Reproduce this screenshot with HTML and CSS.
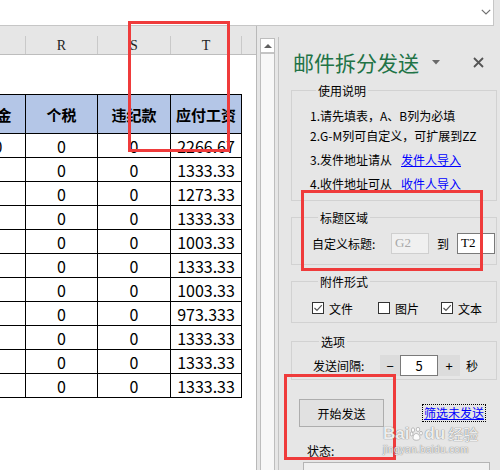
FILE: index.html
```html
<!DOCTYPE html>
<html lang="zh">
<head>
<meta charset="utf-8">
<title>邮件拆分发送</title>
<link rel="stylesheet" href="styles.css">
</head>
<body>
<div class="app">
  <div class="topbar">
    <svg class="chev" width="10" height="6" viewBox="0 0 10 6"><polyline points="0.8,0.8 5,5 9.2,0.8" fill="none" stroke="#707070" stroke-width="1.2"/></svg>
  </div>
  <div class="main">
    <div class="sheet">
      <div class="colhead">
        <div class="ch w73"></div>
        <div class="ch w72">R</div>
        <div class="ch w73">S</div>
        <div class="ch w71">T</div>
        <div class="ch w72"></div>
      </div>
      <div class="grid">
        <div class="c h">公积金</div><div class="c h">个税</div><div class="c h">违纪款</div><div class="c h">应付工资</div>
        <div class="c">200</div><div class="c">0</div><div class="c">0</div><div class="c">2266.67</div>
        <div class="c"></div><div class="c">0</div><div class="c">0</div><div class="c">1333.33</div>
        <div class="c"></div><div class="c">0</div><div class="c">0</div><div class="c">1273.33</div>
        <div class="c"></div><div class="c">0</div><div class="c">0</div><div class="c">1333.33</div>
        <div class="c"></div><div class="c">0</div><div class="c">0</div><div class="c">1003.33</div>
        <div class="c"></div><div class="c">0</div><div class="c">0</div><div class="c">1333.33</div>
        <div class="c"></div><div class="c">0</div><div class="c">0</div><div class="c">1003.33</div>
        <div class="c"></div><div class="c">0</div><div class="c">0</div><div class="c">973.333</div>
        <div class="c"></div><div class="c">0</div><div class="c">0</div><div class="c">1333.33</div>
        <div class="c"></div><div class="c">0</div><div class="c">0</div><div class="c">1333.33</div>
        <div class="c"></div><div class="c">0</div><div class="c">0</div><div class="c">1333.33</div>
      </div>
    </div>
    <div class="vscroll">
      <div class="up"><svg width="8" height="4" viewBox="0 0 8 4"><polygon points="0,4 8,4 4,0" fill="#606060"/></svg></div>
      <div class="track"></div>
    </div>
    <div class="pane">
      <div class="titlerow">
        <span class="title">邮件拆分发送</span>
        <svg class="tri" width="8" height="5" viewBox="0 0 8 5"><polygon points="0,0 8,0 4,4.5" fill="#6a6a6a"/></svg>
        <svg class="close" width="11" height="11" viewBox="0 0 11 11"><path d="M1 1 L10 10 M10 1 L1 10" stroke="#555" stroke-width="1.8"/></svg>
      </div>

      <div class="group g1">
        <div class="legend">使用说明</div>
        <div class="note n1">1.请先填表，A、B列为必填</div>
        <div class="note">2.G-M列可自定义，可扩展到ZZ</div>
        <div class="note gap">3.发件地址请从<a class="link">发件人导入</a></div>
        <div class="note gap">4.收件地址可从<a class="link">收件人导入</a></div>
      </div>

      <div class="group g2">
        <div class="legend">标题区域</div>
        <div class="row r2">
          <span class="lbl l2">自定义标题:</span>
          <span class="inp dis">G2</span>
          <span class="to">到</span>
          <span class="inp">T2</span>
        </div>
      </div>

      <div class="group g3">
        <div class="legend">附件形式</div>
        <div class="row r3">
          <span class="chk"><span class="box"><svg width="10" height="10" viewBox="0 0 10 10"><polyline points="1.5,5 4,7.5 8.8,2.2" fill="none" stroke="#555" stroke-width="1.2"/></svg></span>文件</span>
          <span class="chk c2"><span class="box"></span>图片</span>
          <span class="chk c3"><span class="box"><svg width="10" height="10" viewBox="0 0 10 10"><polyline points="1.5,5 4,7.5 8.8,2.2" fill="none" stroke="#555" stroke-width="1.2"/></svg></span>文本</span>
        </div>
      </div>

      <div class="group g4">
        <div class="legend">选项</div>
        <div class="row r4">
          <span class="lbl l4">发送间隔:</span>
          <span class="spin minus">−</span>
          <span class="num">5</span>
          <span class="spin plus">+</span>
          <span class="sec">秒</span>
        </div>
      </div>

      <div class="actions">
        <span class="btn">开始发送</span>
        <a class="link focus">筛选未发送</a>
      </div>
      <div class="status-lbl">状态:</div>
      <div class="status"></div>
    </div>
  </div>

  <div class="mark m1"></div>
  <div class="mark m2"></div>
  <div class="mark m3"></div>

  <div class="wm">
    <div class="wm-top"><span class="wm-en">Bai</span><svg class="paw" width="13" height="14" viewBox="0 0 13 14"><g fill="rgba(255,255,255,0.85)" stroke="rgba(130,130,130,0.6)" stroke-width="0.8"><ellipse cx="3" cy="3" rx="1.6" ry="2.2"/><ellipse cx="8" cy="2.4" rx="1.6" ry="2.2"/><ellipse cx="1.6" cy="7" rx="1.4" ry="1.9"/><ellipse cx="11" cy="6.2" rx="1.4" ry="1.9"/><path d="M6.2 6.5 C3.5 6.5 2.2 11 3.6 12.5 C5 13.6 8.4 13.4 9.6 12.2 C10.8 10.8 9 6.5 6.2 6.5 Z"/></g></svg><span class="wm-en">du</span><span class="wm-cn">经验</span></div>
    <div class="wm-url">jingyan.baidu.com</div>
  </div>
</div>
</body>
</html>
```
FILE: styles.css
```css
* { box-sizing: border-box; }
html, body { margin: 0; padding: 0; }
body {
  width: 500px;
  height: 470px;
  overflow: hidden;
  background: #e6e6e6;
  font-family: "Noto Sans CJK SC", "Noto Sans", sans-serif;
  font-size: 12px;
  color: #000;
}
.app { position: relative; width: 500px; height: 470px; overflow: hidden; }

/* top formula bar */
.topbar {
  width: 494px;
  height: 26px;
  background: #fff;
  border-right: 1px solid #c6c6c6;
  border-bottom: 1px solid #c6c6c6;
  display: flex;
  justify-content: flex-end;
  align-items: flex-start;
  padding: 9px 2px 0 0;
}
.chev { display: block; }

.main { display: flex; height: 444px; }

/* spreadsheet */
.sheet {
  width: 257px;
  flex: none;
  background: #fff;
  border-right: 1px solid #b9b9b9;
  overflow: hidden;
}
.colhead {
  display: flex;
  align-items: flex-end;
  height: 29px;
  margin-left: -47px;
  background: #e6e6e6;
  border-bottom: 1px solid #bdbdbd;
}
.ch {
  flex: none;
  height: 18px;
  border-right: 1px solid #c9c9c9;
  text-align: center;
  font-family: "Liberation Serif", "DejaVu Serif", serif;
  font-size: 14px;
  line-height: 20px;
  color: #222;
}
.w71 { width: 71px; }
.w72 { width: 72px; }
.w73 { width: 73px; }

.grid {
  display: grid;
  grid-template-columns: 73px 72px 73px 71px;
  width: 289px;
  margin: 39px 0 0 -47px;
  border-top: 1px solid #000;
}
.c {
  height: 24px;
  border-right: 1px solid #000;
  border-bottom: 1px solid #000;
  display: flex;
  align-items: center;
  justify-content: center;
  font-family: "Noto Sans CJK SC", "Noto Sans", sans-serif;
  font-size: 16px;
  line-height: 1;
}
.h {
  height: 39px;
  background: #b4c6e7;
  font-size: 15px;
  font-weight: bold;
}

/* scrollbar */
.vscroll {
  flex: none;
  width: 15px;
  margin: 12px 0 0 3px;
  border-left: 1px solid #bdbdbd;
  border-right: 1px solid #bdbdbd;
  background: #f7f7f7;
  display: flex;
  flex-direction: column;
}
.up {
  height: 16px;
  background: #fff;
  border-top: 1px solid #bdbdbd;
  border-bottom: 2px solid #c4c4c4;
  display: flex;
  align-items: center;
  justify-content: center;
}
.up svg { display: block; }
.track { flex: 1; }

/* task pane */
.pane {
  flex: 1;
  margin: 11px 0 0 3px;
  border-left: 1px solid #c3c3c3;
  padding-top: 11px;
}
.titlerow { display: flex; align-items: center; height: 28px; }
.title {
  margin-left: 14px;
  font-size: 21px;
  line-height: 28px;
  color: #217346;
}
.tri { margin-left: 13px; display: block; }
.close { margin-left: 33px; display: block; }

.group {
  margin: 14px 3px 0 12px;
  border: 1px solid #d2d2d2;
}
.legend {
  display: block;
  width: max-content;
  margin: -8px 0 0 6px;
  padding: 0 2px;
  background: #e6e6e6;
  line-height: 16px;
}
.g1 { padding: 0 0 6px 18px; }
.note { line-height: 20px; white-space: nowrap; }
.n1 { margin-top: 7px; }
.note.gap { margin-top: 4px; }
.link { color: #0000ff; text-decoration: underline; margin-left: 9px; }

.g2 { margin-top: 16px; padding: 0 0 10px 20px; }
.row { display: flex; align-items: center; white-space: nowrap; }
.r2 { margin-top: 7px; height: 21px; }
.l2 { width: 79px; }
.inp {
  width: 38px;
  height: 21px;
  border: 1px solid #7a7a7a;
  background: #fff;
  font-family: "Liberation Serif", "DejaVu Serif", serif;
  font-size: 13px;
  line-height: 18px;
  padding-left: 3px;
}
.inp.dis { background: #f0f0f0; border-color: #cfcfcf; color: #a8a8a8; }
.to { margin: 0 8px; }

.g3 { margin-top: 16px; padding: 0 0 5px 20px; }
.r3 { margin-top: 9px; height: 18px; }
.chk { display: flex; align-items: center; }
.box {
  width: 12px;
  height: 12px;
  border: 1px solid #333;
  background: #fff;
  margin-right: 5px;
  display: flex;
  align-items: center;
  justify-content: center;
}
.box svg { display: block; }
.c2 { margin-left: 25px; }
.c3 { margin-left: 22px; }

.g4 { margin-top: 18px; padding: 0 0 3px 21px; }
.r4 { margin-top: 5px; height: 21px; }
.l4 { width: 67px; }
.spin {
  height: 21px;
  background: #dcdcdc;
  display: flex;
  align-items: center;
  justify-content: center;
  font-size: 13px;
}
.minus { width: 20px; }
.plus { width: 22px; }
.num {
  width: 38px;
  height: 21px;
  border: 1px solid #7a7a7a;
  background: #fff;
  text-align: center;
  line-height: 19px;
  font-size: 13px;
}
.sec { margin-left: 6px; }

.actions { display: flex; align-items: center; margin: 19px 0 0 20px; }
.btn {
  width: 85px;
  height: 28px;
  border: 1px solid #adadad;
  background: #e1e1e1;
  display: flex;
  align-items: center;
  justify-content: center;
}
.link.focus { margin-left: 40px; outline: 1px dotted #000; outline-offset: 1px; line-height: 14px; }
.status-lbl { margin: 16px 0 0 28px; line-height: 16px; }
.status {
  margin: 3px 0 0 24px;
  width: 187px;
  height: 30px;
  border: 1px solid #b4b4b4;
  background: #f0f0f0;
}

/* red annotation rectangles */
.mark { position: absolute; border: 3px solid #ef3b3b; }
.m1 { left: 128px; top: 21px; width: 102px; height: 131px; }
.m2 { left: 301px; top: 190px; width: 182px; height: 81px; }
.m3 { left: 284px; top: 374px; width: 112px; height: 86px; }

/* watermark */
.wm {
  position: absolute;
  left: 383px;
  top: 424px;
  color: rgba(255, 255, 255, 0.9);
  text-shadow: 0 0 1px rgba(100, 100, 100, 0.8), 0 0 1px rgba(100, 100, 100, 0.6);
  font-family: "Liberation Sans", Arial, sans-serif;
}
.wm-top { display: flex; align-items: center; height: 20px; }
.wm-en { font-size: 17px; font-weight: bold; line-height: 20px; }
.paw { margin: 0 1px; display: block; }
.wm-cn { font-family: "Noto Sans CJK SC", sans-serif; font-size: 15px; margin-left: 3px; line-height: 20px; }
.wm-url { font-size: 10px; line-height: 12px; letter-spacing: 0.3px; }
```
